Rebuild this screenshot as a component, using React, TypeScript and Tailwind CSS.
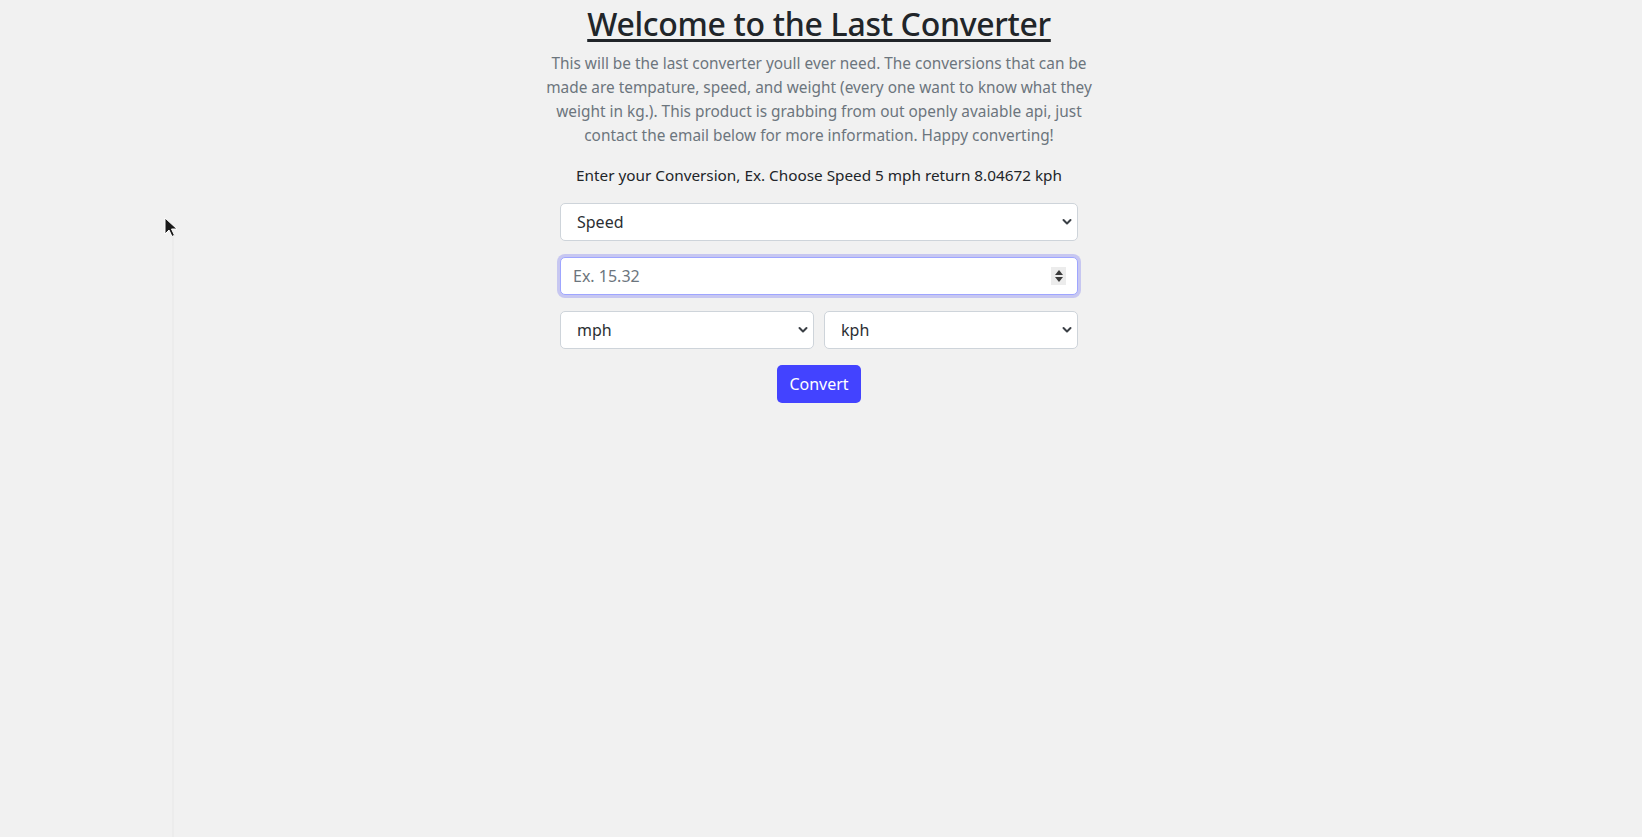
import React from 'react';

const Chevron = () => (
  <svg
    className="pointer-events-none absolute right-[6px] top-1/2 -translate-y-1/2"
    width="10"
    height="7"
    viewBox="0 0 10 7"
  >
    <path d="M1.5 1.5 5 5l3.5-3.5" fill="none" stroke="#3a3f45" strokeWidth="2" strokeLinecap="round" strokeLinejoin="round" />
  </svg>
);

type ISelectProps = {
  value: string;
  options: string[];
  className?: string;
};

const Select = ({ value, options, className = '' }: ISelectProps) => (
  <div className={`relative ${className}`}>
    <select
      defaultValue={value}
      className="h-[38px] w-full appearance-none rounded-[5px] border border-[#ced4da] bg-white pl-4 pr-9 text-[16px] text-[#2b2f33] outline-none"
    >
      {options.map((o) => (
        <option key={o}>{o}</option>
      ))}
    </select>
    <Chevron />
  </div>
);

export default function App() {
  return (
    <div
      className="relative min-h-screen w-full overflow-hidden bg-[#f1f1f1] pr-[4px]"
      style={{ fontFamily: '"Noto Sans", "Open Sans", sans-serif' }}
    >
      {/* faint rule + cursor from the capture */}
      <div className="absolute left-[172px] top-[228px] bottom-0 w-[2px] bg-[#ececec]" />
      <svg className="absolute left-[164px] top-[217px]" width="14" height="21" viewBox="0 0 14 21">
        <path d="M1 1v16l4-4 3 6.5 2.5-1.2-3-6.3H13z" fill="#1a1a1a" stroke="#fff" strokeWidth="1" strokeLinejoin="round" />
      </svg>

      <div className="mx-auto flex w-[560px] flex-col items-center pt-[5px]">
        <h1 className="text-[32px] font-medium leading-[38px] tracking-[-0.3px] text-[#212529] underline decoration-[3px] underline-offset-[3px]">
          Welcome to the Last Converter
        </h1>
        <p className="mt-[9px] w-[560px] text-center text-[15.4px] leading-[24px] text-[#6c757d]">
          This will be the last converter youll ever need. The conversions that can be made are tempature,
          speed, and weight (every one want to know what they weight in kg.). This product is grabbing from out
          openly avaiable api, just contact the email below for more information. Happy converting!
        </p>
        <p className="mt-[15px] text-[15.3px] leading-[24px] text-[#212529]">
          Enter your Conversion, Ex. Choose Speed 5 mph return 8.04672 kph
        </p>

        <div className="mt-[16px] flex w-[518px] flex-col gap-[16px]">
          <Select value="Speed" options={['Tempature', 'Speed', 'Weight']} />
          <div className="relative">
            <input
              type="number"
              placeholder="Ex. 15.32"
              className="h-[38px] w-full rounded-[5px] border border-[#9fa6ff] bg-white px-3 text-[16px] text-[#212529] shadow-[0_0_0_3px_rgba(120,120,240,0.35)] outline-none [appearance:textfield] placeholder:text-[#6c757d] [&::-webkit-inner-spin-button]:appearance-none [&::-webkit-outer-spin-button]:appearance-none"
            />
            <div className="pointer-events-none absolute right-[12px] top-1/2 flex h-[18px] w-[15px] -translate-y-1/2 flex-col items-center justify-center gap-[2px] bg-[#ececec]">
              <svg width="8" height="5" viewBox="0 0 8 5">
                <path d="M4 0 8 5H0z" fill="#3b3b3b" />
              </svg>
              <svg width="8" height="5" viewBox="0 0 8 5">
                <path d="M0 0h8L4 5z" fill="#3b3b3b" />
              </svg>
            </div>
          </div>
          <div className="flex gap-[10px]">
            <Select className="flex-1" value="mph" options={['mph', 'kph']} />
            <Select className="flex-1" value="kph" options={['kph', 'mph']} />
          </div>
        </div>

        <button className="mt-[16px] h-[38px] rounded-[5px] bg-[#4343ff] px-3 text-[16px] text-white">
          Convert
        </button>
      </div>
    </div>
  );
}
